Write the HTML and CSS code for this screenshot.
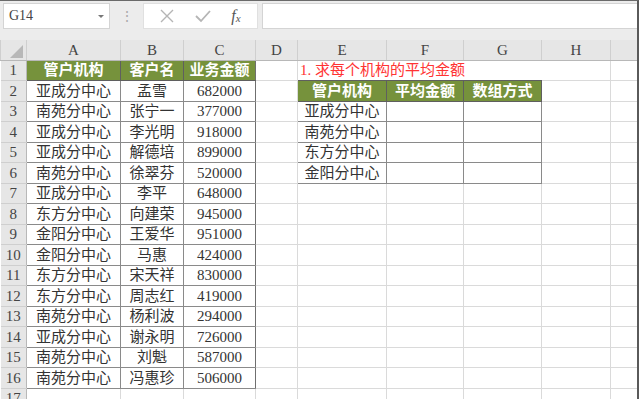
FILE: index.html
```html
<!DOCTYPE html>
<html lang="zh-CN">
<head>
  <meta charset="UTF-8">
  <title>求每个机构的平均金额</title>
  <link rel="stylesheet" href="styles.css">
</head>
<body>
  <div class="window">
    <div class="toolbar">
      <div class="name-box">
        <span>G14</span>
        <span class="arrow"></span>
      </div>
      <div class="dots">⋮</div>
      <div class="formula-btns">
        <svg width="14" height="14" viewBox="0 0 14 14"><path d="M1 1 L13 13 M13 1 L1 13" stroke="#b5b5b5" stroke-width="1.4" fill="none"/></svg>
        <svg width="16" height="14" viewBox="0 0 16 14"><path d="M1 7 L6 12 L15 2" stroke="#b5b5b5" stroke-width="1.8" fill="none"/></svg>
        <span class="fx">f<sub>x</sub></span>
      </div>
      <div class="formula-input"></div>
    </div>

    <table class="sheet">
      <colgroup>
        <col class="w-row">
        <col class="w-a">
        <col class="w-b">
        <col class="w-c">
        <col class="w-d">
        <col class="w-e">
        <col class="w-f">
        <col class="w-g">
        <col class="w-h">
        <col class="w-i">
      </colgroup>
      <thead>
        <tr>
          <th class="corner"><span class="tri"></span></th>
          <th>A</th><th>B</th><th>C</th><th>D</th><th>E</th><th>F</th><th>G</th><th>H</th><th></th>
        </tr>
      </thead>
      <tbody id="rows"></tbody>
    </table>
  </div>
  <script>
    const data = [
      ['亚成分中心', '孟雪', '682000'],
      ['南苑分中心', '张宁一', '377000'],
      ['亚成分中心', '李光明', '918000'],
      ['亚成分中心', '解德培', '899000'],
      ['南苑分中心', '徐翠芬', '520000'],
      ['亚成分中心', '李平', '648000'],
      ['东方分中心', '向建荣', '945000'],
      ['金阳分中心', '王爱华', '951000'],
      ['金阳分中心', '马惠', '424000'],
      ['东方分中心', '宋天祥', '830000'],
      ['东方分中心', '周志红', '419000'],
      ['南苑分中心', '杨利波', '294000'],
      ['亚成分中心', '谢永明', '726000'],
      ['南苑分中心', '刘魁', '587000'],
      ['南苑分中心', '冯惠珍', '506000']
    ];
    const orgs = ['亚成分中心', '南苑分中心', '东方分中心', '金阳分中心'];

    let html = `
      <tr>
        <th>1</th>
        <td class="hd">管户机构</td><td class="hd">客户名</td><td class="hd last">业务金额</td>
        <td></td>
        <td class="title" colspan="3">1. 求每个机构的平均金额</td>
        <td></td><td></td>
      </tr>`;

    data.forEach((r, i) => {
      const n = i + 2;
      let right = '<td></td><td></td><td></td><td></td><td></td>';
      if (n === 2) {
        right = '<td class="hd2">管户机构</td><td class="hd2">平均金额</td><td class="hd2">数组方式</td><td></td><td></td>';
      } else if (n >= 3 && n <= 6) {
        right = `<td class="box">${orgs[n - 3]}</td><td class="box"></td><td class="box"></td><td></td><td></td>`;
      }
      html += `
        <tr>
          <th>${n}</th>
          <td class="cell">${r[0]}</td><td class="cell">${r[1]}</td><td class="cell last">${r[2]}</td>
          <td></td>
          ${right}
        </tr>`;
    });

    html += '<tr><th>17</th><td></td><td></td><td></td><td></td><td></td><td></td><td></td><td></td><td></td></tr>';
    document.getElementById('rows').innerHTML = html;
  </script>
</body>
</html>
```

FILE: styles.css
```css
body {
  margin: 0;
  background-color: #fff;
  font-family: "Liberation Serif", "Noto Sans CJK SC", serif;
  overflow: hidden;
}

.window {
  width: 637px;
  height: 398px;
  border-top: 1px solid #6a6a6a;
  border-right: 2px solid #5a5a5a;
  overflow: hidden;
}

.toolbar {
  display: flex;
  align-items: center;
  height: 39px;
  padding: 0 0 0 3px;
  background-color: #ececec;
  box-sizing: border-box;
  gap: 0;
}

.name-box {
  display: flex;
  align-items: center;
  justify-content: space-between;
  width: 107px;
  height: 26px;
  margin-top: -9px;
  padding: 0 5px 0 5px;
  box-sizing: border-box;
  background-color: #fff;
  border: 1px solid #d4d4d4;
  font-size: 14px;
  color: #444;
}

.arrow {
  width: 0;
  height: 0;
  border-left: 3px solid transparent;
  border-right: 3px solid transparent;
  border-top: 3px solid #777;
}

.dots {
  width: 33px;
  margin-top: -9px;
  text-align: center;
  color: #aaa;
  font-size: 14px;
}

.formula-btns {
  display: flex;
  align-items: center;
  justify-content: space-around;
  width: 115px;
  height: 26px;
  margin-top: -9px;
  padding: 0 6px;
  box-sizing: border-box;
  background-color: #fff;
  border: 1px solid #e0e0e0;
}

.fx {
  font-style: italic;
  font-size: 16px;
  color: #555;
}

.fx sub {
  font-size: 11px;
  vertical-align: -1px;
}

.formula-input {
  flex: 1;
  height: 26px;
  margin-top: -9px;
  margin-left: 4px;
  background-color: #fff;
  border: 1px solid #d4d4d4;
  border-right: none;
  box-sizing: border-box;
}

table.sheet {
  table-layout: fixed;
  width: 637px;
  border-collapse: collapse;
  font-size: 15px;
  color: #333;
}

.w-row { width: 26px; }
.w-a { width: 94px; }
.w-b { width: 63px; }
.w-c { width: 72px; }
.w-d { width: 42px; }
.w-e { width: 89px; }
.w-f { width: 77px; }
.w-g { width: 78px; }
.w-h { width: 69px; }
.w-i { width: 27px; }

.sheet tr {
  height: 20.5px;
}

.sheet thead tr {
  height: 20px;
}

.sheet th {
  padding: 0;
  background-color: #e6e6e6;
  font-weight: normal;
  color: #444;
  border: 1px solid #cfcfcf;
  border-top: none;
  text-align: center;
  line-height: 18px;
}

.sheet thead th {
  border-bottom: 1px solid #b8b8b8;
}

.sheet tbody th {
  border-right: 1px solid #b8b8b8;
  border-left: none;
}

.sheet th.corner {
  position: relative;
}

.tri {
  position: absolute;
  right: 3px;
  bottom: 2px;
  width: 0;
  height: 0;
  border-left: 13px solid transparent;
  border-bottom: 13px solid #b8b8b8;
}

.sheet td {
  padding: 0;
  border: 1px solid #dadada;
  text-align: center;
  white-space: nowrap;
  line-height: 18px;
}

.sheet td.hd,
.sheet td.hd2 {
  background-color: #76923c;
  color: #fff;
  font-weight: bold;
  border: 1px solid #5f5f5f;
}

.sheet td.cell,
.sheet td.box {
  border: 1px solid #8a8a8a;
}

.sheet td.last {
  border-right: 1px solid #6f6f6f;
}

.sheet td.title {
  text-align: left;
  padding-left: 2px;
  color: #ff3333;
  border: 1px solid transparent;
  border-bottom-color: #5f5f5f;
}
```
